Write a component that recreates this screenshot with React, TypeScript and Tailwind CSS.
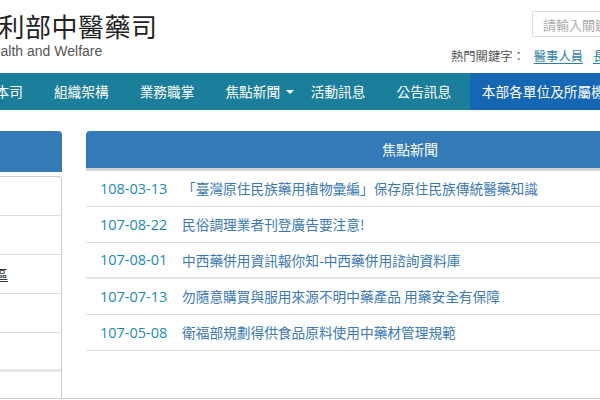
import React from 'react';

const cjk = { fontFamily: '"Noto Sans CJK TC", "Noto Sans", sans-serif' };

const navItems = ['本司', '組織架構', '業務職掌', '焦點新聞', '活動訊息', '公告訊息'];

const news = [
  { date: '108-03-13', title: '「臺灣原住民族藥用植物彙編」保存原住民族傳統醫藥知識' },
  { date: '107-08-22', title: '民俗調理業者刊登廣告要注意!' },
  { date: '107-08-01', title: '中西藥併用資訊報你知-中西藥併用諮詢資料庫' },
  { date: '107-07-13', title: '勿隨意購買與服用來源不明中藥產品 用藥安全有保障' },
  { date: '107-05-08', title: '衛福部規劃得供食品原料使用中藥材管理規範' },
];

export default function App() {
  return (
    <div className="w-[600px] h-[400px] overflow-hidden bg-white" style={cjk}>
      {/* Header */}
      <div className="flex h-[73px]">
        <div className="w-[300px] shrink-0 pt-[9px]">
          <div className="ml-[-81px] text-[26px] leading-[34px] tracking-[0.5px] text-[#222]">
            衛生福利部中醫藥司
          </div>
          <div
            className="ml-[-85px] text-[14px] leading-[16px] text-[#555] whitespace-nowrap"
            style={{ fontFamily: '"Liberation Sans", Arial, sans-serif' }}
          >
            Ministry of Health and Welfare
          </div>
        </div>
        <div className="w-[420px] shrink-0">
          <input
            className="ml-[232px] mt-[11px] w-[180px] h-[26px] border border-[#ddd] px-[10px] text-[13px] placeholder:text-[#aaa] outline-none"
            placeholder="請輸入關鍵字"
          />
          <div className="ml-[151px] mt-[11px] flex items-center text-[12.3px] leading-[16px] whitespace-nowrap">
            <span className="text-[#555]">熱門關鍵字：</span>
            <span className="ml-[9px] text-[#2f7ea6] underline underline-offset-2">醫事人員</span>
            <span className="ml-[10px] text-[#2f7ea6] underline underline-offset-2">長期照護</span>
          </div>
        </div>
      </div>

      {/* Nav */}
      <div className="flex h-[37px] bg-[#1b7f9b] ml-[-20px] w-[700px] text-white text-[13.7px] leading-[37px] whitespace-nowrap">
        {navItems.map((item) =>
          item === '焦點新聞' ? (
            <div key={item} className="flex items-center pl-[15.5px] pr-[1px]">
              <span>{item}</span>
              <span className="ml-[6px] w-0 h-0 border-x-[4px] border-x-transparent border-t-[4px] border-t-white" />
            </div>
          ) : (
            <div key={item} className="px-[15.5px]">
              {item}
            </div>
          )
        )}
        <div className="ml-[3px] bg-[#1566b3] px-[12px] w-[200px]">本部各單位及所屬機關</div>
      </div>

      {/* Content */}
      <div className="flex mt-[21px] h-[267px]">
        {/* Sidebar */}
        <div className="ml-[-200px] w-[262px] shrink-0 flex flex-col">
          <div className="h-[41px] bg-[#337ab7] rounded-tr-[4px]" />
          <div className="mt-[4px] flex-1 border-t border-r border-[#ccc] rounded-tr-[4px]">
            <div className="h-[39px] border-b border-[#ddd]" />
            <div className="h-[39px] border-b border-[#ddd]" />
            <div className="h-[39px] border-b border-[#ddd] flex items-center pl-[143px]">
              <span className="text-[13px] text-[#333] underline underline-offset-2 whitespace-nowrap">中醫藥專區</span>
            </div>
            <div className="h-[39px] border-b border-[#ddd]" />
            <div className="h-[39px] border-b-[3px] border-[#e6e6e6]" />
          </div>
        </div>

        {/* Focus news panel */}
        <div className="ml-[24px] w-[648px] shrink-0">
          <div className="h-[40px] bg-[#337ab7] rounded-tl-[4px] border-b-[3px] border-[#d3d3d3] flex items-center justify-center text-white text-[14px]">
            焦點新聞
          </div>
          {news.map((n, i) => (
            <div
              key={n.date}
              className={`h-[36px] flex items-center pl-[14px] whitespace-nowrap ${
                i === 2 ? 'border-b-2 border-[#e3e3e3]' : 'border-b border-[#ddd]'
              }`}
            >
              <span
                className="w-[82px] text-[14.5px] text-[#1b8bb3]"
                style={{ fontFamily: '"Open Sans", sans-serif' }}
              >
                {n.date}
              </span>
              <span className="text-[13.7px] text-[#3b78b4]">{n.title}</span>
            </div>
          ))}
        </div>
      </div>
      <div className="border-t border-[#ccc]" />
    </div>
  );
}
